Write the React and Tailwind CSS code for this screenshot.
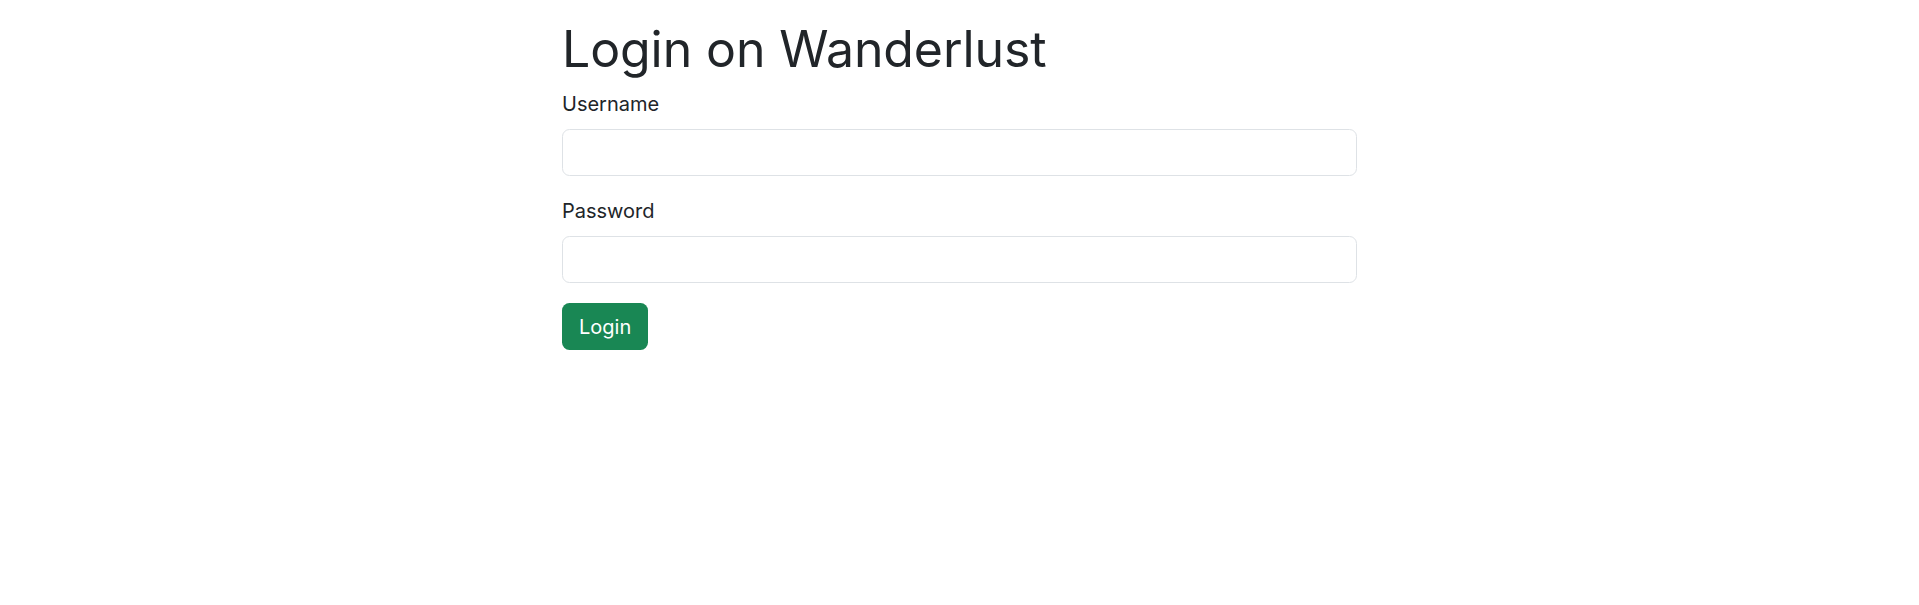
export default function App() {
  return (
    <div className="min-h-[605px] bg-white text-[#212529]" style={{ fontFamily: "Inter, 'Noto Sans', sans-serif" }}>
      <div className="mx-auto w-[795px] pt-[19px]">
        <h1 className="text-[50px] leading-[60px] font-normal mb-[10px] tracking-[-0.1px]">Login on Wanderlust</h1>
        <form onSubmit={(e) => e.preventDefault()}>
          <div className="mb-[20px]">
            <label className="block text-[20px] leading-[30px] mb-[10px]">Username</label>
            <input type="text" className="block w-full h-[47px] rounded-[7.5px] border border-[#dee2e6] px-[15px] text-[20px] outline-none" />
          </div>
          <div className="mb-[20px]">
            <label className="block text-[20px] leading-[30px] mb-[10px]">Password</label>
            <input type="password" className="block w-full h-[47px] rounded-[7.5px] border border-[#dee2e6] px-[15px] text-[20px] outline-none" />
          </div>
          <button type="submit" className="h-[47px] px-[17px] rounded-[7.5px] bg-[#198754] text-white text-[20px] leading-[30px]">Login</button>
        </form>
      </div>
    </div>
  );
}
